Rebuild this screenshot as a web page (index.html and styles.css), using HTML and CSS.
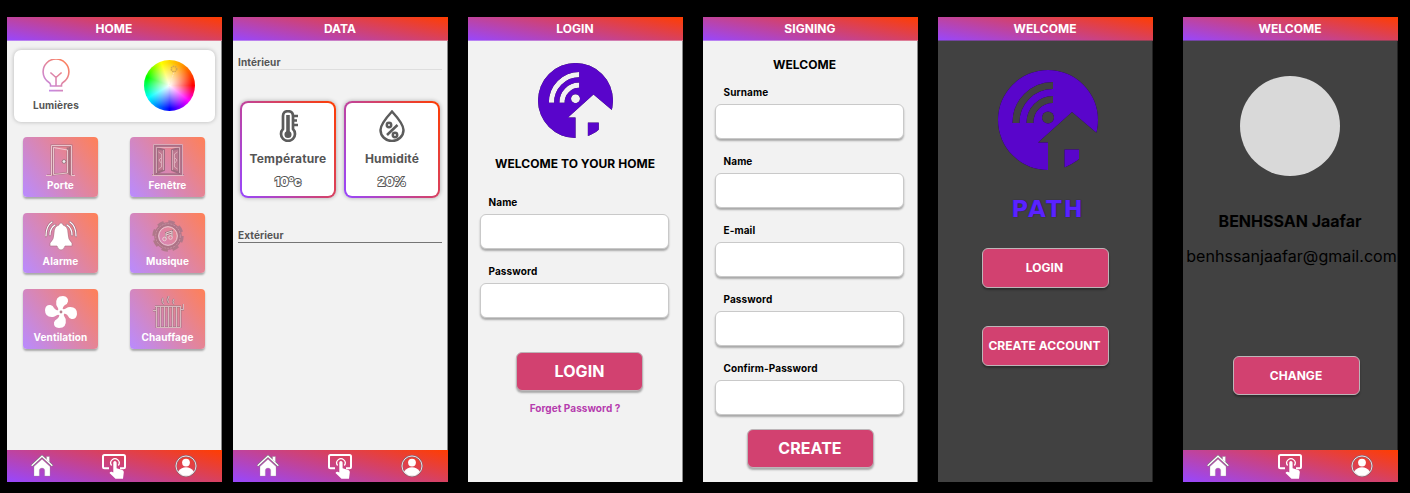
FILE: index.html
```html
<!DOCTYPE html>
<html lang="fr">
<head>
<meta charset="utf-8">
<title>Path</title>
<link rel="stylesheet" href="styles.css">
</head>
<body>
<svg class="defs" width="0" height="0">
  <defs>
    <linearGradient id="warm" gradientUnits="userSpaceOnUse" x1="0" y1="33" x2="28" y2="5"><stop offset="0" stop-color="#b98bff"/><stop offset="1" stop-color="#ff8057"/></linearGradient>
    <mask id="house-cut" maskUnits="userSpaceOnUse" x="0" y="0" width="100" height="100">
      <rect width="100" height="100" fill="#fff"/>
      <path d="M18 53A37 37 0 0 1 55 15.5M32 53A23 23 0 0 1 55 29.5" fill="none" stroke="#000" stroke-width="7"/>
      <circle cx="50" cy="47.5" r="6"/>
      <path d="M74 42L120 81V120H50V72.5H40Z"/>
      <rect x="66.5" y="79.5" width="14.5" height="20" fill="#fff"/>
    </mask>
    <symbol id="logo" viewBox="0 0 100 100"><circle cx="50" cy="50" r="50" fill="#5905cb" mask="url(#house-cut)"/></symbol>
    <symbol id="nav-home" viewBox="0 0 22 22">
      <path d="M.5 10.8L11 1L21.5 10.8" fill="none" stroke="#777" stroke-width="2.4"/>
      <path d="M15.5 1.5h3v6l-3-2.8z" fill="#fff" stroke="#888" stroke-width=".4"/>
      <path d="M.7 10.8L11 1.2L21.3 10.8" fill="none" stroke="#fff" stroke-width="1.3"/>
      <path d="M11 4.3L19 11.5V21H13.7V15.5Q13.7 13 11 13T8.3 15.5V21H3V11.5Z" fill="#fff" stroke="#999" stroke-width=".3"/>
    </symbol>
    <symbol id="nav-touch" viewBox="0 0 24 25">
      <path d="M7 14.2H2.5Q1 14.2 1 12.7V2.5Q1 1 2.5 1H21.5Q23 1 23 2.5V12.7Q23 14.2 21.5 14.2H18" fill="none" stroke="#fff" stroke-width="2"/>
      <path d="M9.6 11.5A4.2 4.2 0 1 1 16.3 11.5" fill="none" stroke="#fff" stroke-width="1.3"/>
      <path d="M11.3 8.5Q11.4 7 12.9 7T14.6 8.5V14.2L20.4 16Q22 16.7 21.8 18.2L21 24.7H13.5L7.5 19Q8.3 17.5 9.7 17.8L11.3 18.4Z" fill="#fff"/>
    </symbol>
    <symbol id="nav-user" viewBox="0 0 22 22">
      <circle cx="11" cy="11" r="10" fill="none" stroke="#8b6270" stroke-width="1.8"/>
      <circle cx="11" cy="11" r="10" fill="none" stroke="#fff" stroke-width=".8"/>
      <circle cx="11" cy="7.6" r="3.9" fill="#fff"/>
      <path d="M3.2 16.5Q6.5 12.3 11 12.3T18.8 16.5Q16 20.7 11 20.7T3.2 16.5Z" fill="#fff"/>
    </symbol>
  </defs>
</svg>
<main class="board">

  <section class="phone">
    <header class="bar">HOME</header>
    <div class="content">
      <div class="lights">
        <div class="lights-label">
          <svg width="28" height="33" viewBox="0 0 28 33" fill="none" stroke="url(#warm)" stroke-width="1.6"><path d="M8.5 27V25.5Q8.300 24 5.5 22.3A12.9 12.7 0 1 1 22.5 22.3Q19.700 24 19.5 25.5V27ZM14 27V18.5L8.4 13.5M14 18.5L19.6 13.5M7 31.600H21"/></svg>
          <span>Lumières</span>
        </div>
        <div class="wheel"><svg width="51" height="51" viewBox="0 0 51 51"><path d="M30 12L25 27" stroke="#ffe6cf" stroke-width=".7" stroke-dasharray="2 1"/><circle cx="30" cy="9" r="2.7" fill="none" stroke="#d2a650" stroke-width="1.6" stroke-dasharray="1.5 .7"/></svg></div>
      </div>
      <div class="tiles">
        <div class="tile"><svg viewBox="0 0 32 32" fill="none"><path d="M2 31.500H6.500V1.500H26.500V31.500H29M8.500 3.500V30.500L22.500 29V3.500M24.500 3V31" stroke="#a5717f" stroke-width="1.800"/><path d="M1 31.500H6.500V1.500H26.500V31.500H30M8.500 3.500V30.500L22.500 29V6L8.500 3.500" stroke="#f0d0d6" stroke-width=".9"/><circle cx="19" cy="17.500" r="1.900" fill="#eee" stroke="#8e6570" stroke-width=".8"/></svg><span>Porte</span></div>
        <div class="tile"><svg viewBox="0 0 32 32" fill="none"><path d="M2.500 1.500H29.500V30.500H2.500ZM0 31.500H32" stroke="#a87088" stroke-width="2.600"/><path d="M5 4L12 6V26L5 29ZM27 4L20 6V26L27 29Z" fill="#bd7890" stroke="#9e6b80" stroke-width="2"/><path d="M1.500 .5H30.500V31.500H1.500ZM4.500 3V29M27.500 3V29M5 3.500H27M11.500 6V26M20.500 6V26M6.500 8L9.500 10V23L6.500 25M25.500 8L22.500 10V23L25.500 25M9 14L7 16L9 19M23 14L25 16L23 19M0 31.500H32" stroke="#e8c1cb" stroke-width=".7"/></svg><span>Fenêtre</span></div>
        <div class="tile"><svg viewBox="0 0 32 32"><path d="M14 5Q14 3 16 3T18 5Q23 6.5 23 13Q23 20 27 23V26H20Q19 30 16 30T12 26H5V23Q9 20 9 13Q9 6.5 14 5Z" fill="#fff" stroke="#a76f81" stroke-width=".6"/><path d="M7 2Q1 6 1 16M10 5Q5 8 5 15M25 2Q31 6 31 16M22 5Q27 8 27 15" fill="none" stroke="#a46c80" stroke-width="2.6" stroke-linecap="round"/><path d="M7 2Q1 6 1 16M10 5Q5 8 5 15M25 2Q31 6 31 16M22 5Q27 8 27 15" fill="none" stroke="#fff" stroke-width="1.2" stroke-linecap="round"/></svg><span>Alarme</span></div>
        <div class="tile"><svg viewBox="0 0 32 32" fill="none"><circle cx="16" cy="16" r="11.800" stroke="#ad7487" stroke-width="4"/><circle cx="16" cy="16" r="14.400" stroke="#b0788a" stroke-width="2.600" stroke-dasharray="6.500 4.800"/><circle cx="16" cy="16" r="12.300" stroke="#cf9aaa" stroke-width=".8" stroke-dasharray="2 1"/><circle cx="16" cy="16" r="9.300" stroke="#e8ccd2" stroke-width="1"/><path d="M14 19V13L20 11V17M14 15L20 13" stroke="#9c7680" stroke-width="2"/><path d="M14 19V13L20 11V17M14 15L20 13" stroke="#e8ccd2"/><circle cx="12.5" cy="19" r="1.8" stroke="#e8ccd2"/><circle cx="18.5" cy="17.5" r="1.8" stroke="#e8ccd2"/></svg><span>Musique</span></div>
        <div class="tile"><svg viewBox="0 0 32 32" fill="#fff"><path id="blade" d="M14 15Q13 11.500 11.300 9Q10 0 18 0Q23.500 .5 23 5.500Q22.500 8 20 9Q17.500 10.500 17.300 15Z"/><use href="#blade" transform="rotate(90 16 16)"/><use href="#blade" transform="rotate(180 16 16)"/><use href="#blade" transform="rotate(270 16 16)"/><circle cx="16" cy="16" r="3.6"/><circle cx="16" cy="16" r="1.4" fill="#b9808f"/></svg><span>Ventilation</span></div>
        <div class="tile"><svg viewBox="0 0 32 32" fill="none"><path d="M1 14.500H4M4.500 11V31.500H28.500V11M3 10.500H29M29 13.500H31.500V8M8.500 11V31M12.500 11V31M16.500 11V31M20.500 11V31M24.500 11V31M12 8Q9 6 11 2M17 7Q14 4 17 0M22 8Q20 6 22 3" stroke="#9c7680" stroke-width="1.900"/><path d="M1 14.500H4M4.500 11V31.500H28.500V11M3 10.500H29M29 13.500H31.500V8M8.500 11V31M12.500 11V31M16.500 11V31M20.500 11V31M24.500 11V31M12 8Q9 6 11 2M17 7Q14 4 17 0M22 8Q20 6 22 3" stroke="#e6cace" stroke-width=".8"/></svg><span>Chauffage</span></div>
      </div>
    </div>
    <nav class="nav"><svg width="22" height="22"><use href="#nav-home"/></svg><svg width="24" height="25"><use href="#nav-touch"/></svg><svg width="22" height="22"><use href="#nav-user"/></svg></nav>
  </section>

  <section class="phone">
    <header class="bar">DATA</header>
    <div class="content data">
      <h2 class="group">Intérieur</h2>
      <div class="sensors">
        <div class="sensor">
          <svg viewBox="0 0 32 32" fill="none" stroke="#5c5c5c" stroke-width="2.700"><path d="M11 19V6Q11 1.200 16 1.200T21 6V19A7 7 0 1 1 11 19Z"/><path d="M16 5V24" stroke-width="3.600"/><circle cx="16" cy="24.500" r="2.200" fill="#5c5c5c"/><path d="M20 6H26M20 10.500H25M20 15H26" stroke-width="2.400"/></svg>
          <span class="sensor-name">Température</span><span class="sensor-value">10°c</span>
        </div>
        <div class="sensor">
          <svg viewBox="0 0 32 32" fill="none" stroke="#5c5c5c" stroke-width="2.500"><path d="M16 1.500Q27.500 14 27.500 20A11.500 11 0 0 1 4.500 20Q4.500 14 16 1.500Z"/><circle cx="13" cy="15" r="2.200"/><circle cx="19" cy="25" r="2.200"/><path d="M21.500 15L11 25"/></svg>
          <span class="sensor-name">Humidité</span><span class="sensor-value">20%</span>
        </div>
      </div>
      <h2 class="group group-strong">Extérieur</h2>
    </div>
    <nav class="nav"><svg width="22" height="22"><use href="#nav-home"/></svg><svg width="24" height="25"><use href="#nav-touch"/></svg><svg width="22" height="22"><use href="#nav-user"/></svg></nav>
  </section>

  <section class="phone">
    <header class="bar">LOGIN</header>
    <div class="content login">
      <svg class="logo logo-small"><use href="#logo"/></svg>
      <h1 class="title">WELCOME TO YOUR HOME</h1>
      <div class="fields">
        <label class="field">Name<input class="input"></label>
        <label class="field">Password<input class="input"></label>
      </div>
      <button class="button button-large">LOGIN</button>
      <a class="forgot">Forget Password ?</a>
    </div>
  </section>

  <section class="phone">
    <header class="bar">SIGNING</header>
    <div class="content signing">
      <h1 class="title">WELCOME</h1>
      <div class="fields">
        <label class="field">Surname<input class="input"></label>
        <label class="field">Name<input class="input"></label>
        <label class="field">E-mail<input class="input"></label>
        <label class="field">Password<input class="input"></label>
        <label class="field">Confirm-Password<input class="input"></label>
      </div>
      <button class="button button-large">CREATE</button>
    </div>
  </section>

  <section class="phone dark">
    <header class="bar">WELCOME</header>
    <div class="content welcome">
      <svg class="logo logo-large"><use href="#logo"/></svg>
      <div class="brand">PATH</div>
      <div class="actions"><button class="button">LOGIN</button><button class="button">CREATE ACCOUNT</button></div>
    </div>
  </section>

  <section class="phone dark">
    <header class="bar">WELCOME</header>
    <div class="content profile">
      <div class="avatar"></div>
      <div class="user-name">BENHSSAN Jaafar</div>
      <div class="user-mail">benhssanjaafar@gmail.com</div>
      <button class="button">CHANGE</button>
    </div>
    <nav class="nav"><svg width="22" height="22"><use href="#nav-home"/></svg><svg width="24" height="25"><use href="#nav-touch"/></svg><svg width="22" height="22"><use href="#nav-user"/></svg></nav>
  </section>
</main>
</body>
</html>
```
FILE: styles.css
```css
* { box-sizing: border-box; }
:root { --flame: #9747ff, #ff3d00; }
body { margin: 0; background: #000; font-family: Inter, "Liberation Sans", sans-serif; font-weight: 700; overflow: hidden; }
svg { display: block; flex: none; }
.defs { position: absolute; }
.board { display: grid; grid-template-columns: 226px 235px 235px 235px 245px 215px; padding: 17px 0 11px 7px; height: 493px; }
.phone { width: 215px; height: 465px; display: flex; flex-direction: column; background: #f2f2f2; color: #000; }
.dark { background: #414141; }
.bar { height: 24px; flex: none; background: linear-gradient(10.5deg, var(--flame)); color: #fff; font-size: 12px; line-height: 24px; text-align: center; padding-right: 1px; letter-spacing: .05px; box-shadow: inset 0 -1px rgba(242,242,242,.35); }
.dark .bar { box-shadow: inset 0 -1px rgba(65,65,65,.45); }
.content { flex: 1; min-height: 0; display: flex; flex-direction: column; align-items: center; border-right: 1px solid #8a8a8a; }
.dark .content { border-right-color: #242424; }
.nav { height: 32px; flex: none; background: linear-gradient(14deg, var(--flame)); display: grid; grid-template-columns: 70px 74px 70px; align-items: center; justify-items: center; }

.lights { width: 201px; height: 72px; margin: 9px 0 0 1px; background: #fff; border-radius: 7px; box-shadow: 0 0 4px rgba(0,0,0,.25); display: flex; justify-content: space-between; padding: 9px 20px 0 19px; }
.lights-label { display: flex; flex-direction: column; align-items: center; color: #555; font-size: 10px; line-height: 14px; letter-spacing: .1px; gap: 6px; }
.wheel { width: 51px; height: 51px; margin-top: 1px; border-radius: 50%; background: radial-gradient(circle closest-side, #fff 0, rgba(255,255,255,0) 90%), conic-gradient(from 90deg, #f00, #f0f 38deg, #00f 90deg, #0ff 150deg, #0f0 200deg, #ff0 250deg, #ff9d00 300deg, #f00); }
.tiles { display: grid; grid-template-columns: 75px 75px; grid-auto-rows: 60px; gap: 16px 32px; margin-top: 15.4px; }
.tile { border-radius: 4px; background: linear-gradient(54deg, #b98bff, #ff8057); box-shadow: 0 2px 2px rgba(0,0,0,.3); display: flex; flex-direction: column; align-items: center; padding: 6.6px 0 0; color: #fff; font-size: 10px; line-height: 14px; letter-spacing: .1px; gap: 2px; }
.tile svg { width: 32px; height: 32px; }

.group { margin: 15px 0 0; width: 204px; height: 14px; font-size: 10px; line-height: 13px; letter-spacing: .1px; color: #555; border-bottom: 1px solid #dedede; }
.group-strong { margin-top: 31px; border-color: #757575; }
.sensors { display: flex; gap: 8px; margin-top: 31px; }
.sensor { width: 96px; height: 97px; border: 2px solid transparent; border-radius: 8px; background: linear-gradient(#fff,#fff) padding-box, linear-gradient(59deg, var(--flame)) border-box; box-shadow: 0 0 4px rgba(0,0,0,.3); color: #555; display: flex; flex-direction: column; align-items: center; padding-top: 7px; }
.sensor svg { width: 32px; height: 32px; }
.sensor-name { margin-top: 9px; font-size: 12px; line-height: 16px; letter-spacing: .15px; }
.sensor-value { margin-top: 7px; font-size: 12px; font-weight: 800; line-height: 16px; color: #fff; -webkit-text-stroke: 1.800px #555; paint-order: stroke fill; }

.logo { filter: drop-shadow(0 0 .6px rgba(0,0,0,.8)); overflow: visible; }
.logo-small { width: 75px; height: 75px; margin-top: 22px; }
.logo-large { width: 100px; height: 100px; margin: 29px 0 0 5px; }
.title { margin: 0; font-size: 12px; line-height: 16px; letter-spacing: .05px; }
.login .title { margin-top: 18px; }
.signing .title { margin: 16px 0 0 -11px; }
.fields { display: flex; flex-direction: column; gap: 15px; width: 189px; margin-right: 1px; }
.login .fields { margin-top: 23px; }
.signing .fields { margin-top: 12px; }
.field { height: 54px; display: flex; flex-direction: column; gap: 5px; font-size: 10px; line-height: 14px; letter-spacing: .1px; text-indent: 8.500px; }
.input { width: 189px; height: 35px; flex: none; border: 1px solid #c9c9c9; border-radius: 6px; background: #fff; box-shadow: 0 2px 2px rgba(0,0,0,.3); padding: 0; outline: 0; }
.button { width: 127px; height: 39px; flex: none; padding: 0 1px 0 0; border: 1px solid #bdb5b8; border-radius: 6px; background: #d24170; box-shadow: 0 2px 2px rgba(0,0,0,.3); color: #fff; font: 700 12px Inter, sans-serif; letter-spacing: .05px; white-space: nowrap; }
.button-large { font-size: 16px; padding: 0 0 1px; }
.login .button { margin: 34px 0 0 9px; }
.signing .button { margin-top: 14px; }
.forgot { margin-top: 10px; font-size: 10px; line-height: 14px; letter-spacing: .05px; color: #b63cae; }
.brand { margin: 27px 0 0 6px; height: 24px; font: 700 23px/24px "DejaVu Sans", sans-serif; letter-spacing: 2px; color: #5a22ff; text-shadow: 0 0 1px #16004a; }
.actions { display: flex; flex-direction: column; gap: 38px; margin-top: 27px; }
.actions .button { height: 40px; padding-bottom: 1px; }
.avatar { width: 100px; height: 100px; margin-top: 34.500px; border-radius: 50%; background: #d9d9d9; }
.user-name { margin-top: 35px; font-size: 16px; line-height: 20px; }
.user-mail { margin: 15px 0 0 3px; font-size: 16px; line-height: 20px; font-weight: 400; letter-spacing: .06px; }
.profile .button { margin: 90px 0 0 13px; }
```
